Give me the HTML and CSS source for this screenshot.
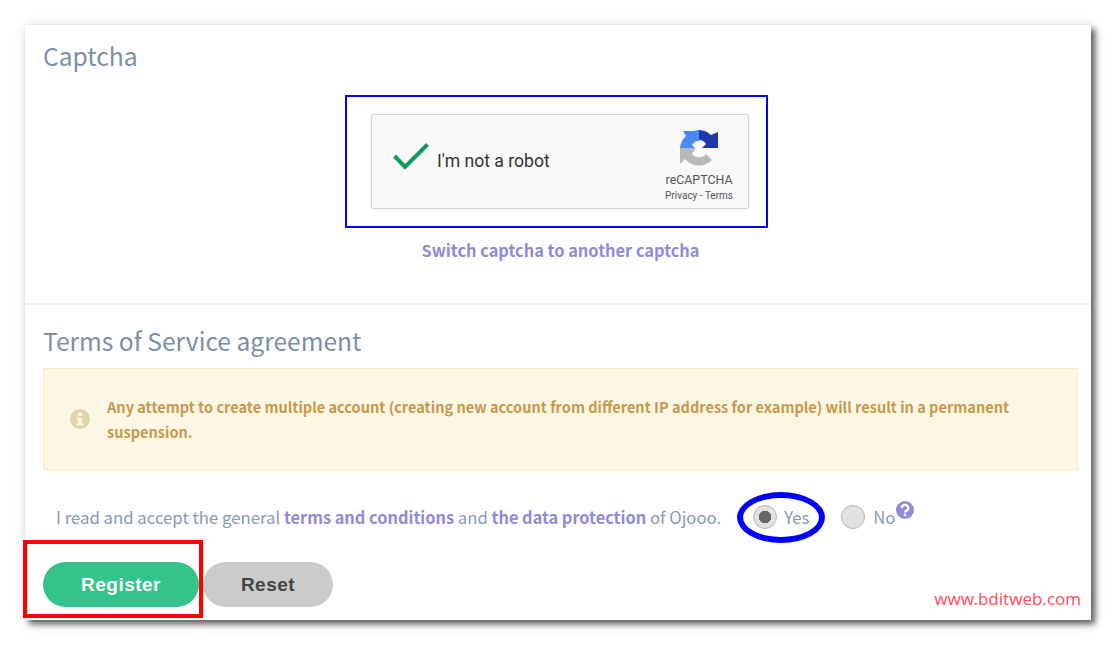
FILE: index.html
```html
<!DOCTYPE html>
<html lang="en">
<head>
    <meta charset="UTF-8">
    <meta name="viewport" content="width=device-width, initial-scale=1.0">
    <title>Register</title>
    <link rel="stylesheet" href="styles.css">
</head>
<body>
    <div class="card">
        <div class="captcha-section">
            <h2 class="section-title title-captcha">Captcha</h2>
            <div class="captcha-mark">
                <div class="recaptcha">
                    <svg class="recaptcha-check" width="36" height="27" viewBox="0 0 36 27">
                        <path d="M1.500 13 L12 24 L34.500 1.500" fill="none" stroke="#0f9d58" stroke-width="4"/>
                    </svg>
                    <span class="recaptcha-label">I'm not a robot</span>
                    <div class="recaptcha-brand">
                        <svg class="recaptcha-logo" width="38" height="38" viewBox="0 0 38 38">
                            <path d="M19 1 L19 12 A8 8 0 0 0 12 16 L15 19 L0 19 A19 19 0 0 1 6 7 L3 2 L14 2 A18 18 0 0 1 19 1 Z" fill="#4a8af4"/>
                            <path d="M19 1 A18 18 0 0 1 31 6 L38 3 L38 19 L22 19 L26 15 A9 9 0 0 0 19 11 Z" fill="#1c3aa9"/>
                            <path d="M0 19 L0 35 L5 30 A18 18 0 0 0 32 31 L26 25 A9 9 0 0 1 12 25 L16 19 Z" fill="#b9b9b9"/>
                        </svg>
                        <span class="recaptcha-name">reCAPTCHA</span>
                        <span class="recaptcha-links">Privacy - Terms</span>
                    </div>
                </div>
            </div>
            <a class="switch-link" href="#">Switch captcha to another captcha</a>
        </div>

        <div class="terms-section">
            <h2 class="section-title">Terms of Service agreement</h2>
            <div class="alert">
                <svg class="alert-icon" width="20" height="20" viewBox="0 0 20 20">
                    <circle cx="10" cy="10" r="10" fill="#e3d3a8"/>
                    <rect x="8" y="3.500" width="4" height="3.500" fill="#fdf6e3"/>
                    <path d="M6.500 8.500 H12 V14.500 H13.500 V16.500 H6.500 V14.500 H8 V10.500 H6.500 Z" fill="#fdf6e3"/>
                </svg>
                <p class="alert-text">Any attempt to create multiple account (creating new account from different IP address for example) will result in a permanent suspension.</p>
            </div>
            <div class="accept-row">
                <span>I read and accept the general <a href="#">terms and conditions</a> and <a href="#">the data protection</a> of Ojooo.</span>
                <div class="yes-mark">
                    <span class="radio radio-on"></span>
                    <span>Yes</span>
                </div>
                <div class="no-option">
                    <span class="radio"></span>
                    <span>No</span>
                    <svg class="help-icon" width="18" height="18" viewBox="0 0 18 18">
                        <circle cx="9" cy="9" r="9" fill="#8f8bd8"/>
                        <path d="M5.800 7 A3.200 3 0 1 1 10.500 9.600 Q9 10.300 9 11.500" fill="none" stroke="#fff" stroke-width="2.300"/>
                        <rect x="7.800" y="12.700" width="2.400" height="2.400" fill="#fff"/>
                    </svg>
                </div>
            </div>
            <div class="button-row">
                <div class="register-mark">
                    <button class="btn btn-register">Register</button>
                </div>
                <button class="btn btn-reset">Reset</button>
            </div>
        </div>
        <span class="watermark">www.bditweb.com</span>
    </div>
</body>
</html>
```

FILE: styles.css
```css
* {
    box-sizing: border-box;
}
body {
    margin: 0;
    padding: 25px;
    min-height: 645px;
    background: #fff;
    font-family: "Noto Sans CJK SC", "Open Sans", sans-serif;
    color: #8a9ab3;
}
a {
    color: #8f8bd8;
    font-weight: 700;
    text-decoration: none;
}
.card {
    position: relative;
    width: 1066px;
    height: 595px;
    background: #fff;
    box-shadow: 4px 4px 6px rgba(0, 0, 0, 0.6), 2px 2px 14px rgba(0, 0, 0, 0.14);
}
.section-title {
    margin: 0;
    font-size: 24.600px;
    line-height: 34px;
    font-weight: 400;
    color: #7b8fa8;
}

/* captcha */
.captcha-section {
    height: 280px;
    padding: 13px 13px 0 18px;
    display: flex;
    flex-direction: column;
    align-items: center;
    border-bottom: 2px solid #f0f3f7;
}
.title-captcha {
    align-self: flex-start;
}
.captcha-mark {
    margin: 23px 8px 0 0;
    width: 423px;
    height: 133px;
    padding: 17px 0 0 24px;
    border: 2px solid #0000ff;
}
.recaptcha {
    width: 378px;
    height: 95px;
    display: flex;
    align-items: center;
    padding: 0 15px 0 21px;
    background: #f9f9f9;
    border: 1px solid #d3d3d3;
    border-radius: 3px;
    box-shadow: 0 0 4px rgba(0, 0, 0, 0.08);
    font-family: Roboto, sans-serif;
}
.recaptcha-check {
    flex: none;
    margin-bottom: 10px;
}
.recaptcha-label {
    margin: -2px 0 0 8px;
    font-size: 17.600px;
    color: #333;
}
.recaptcha-brand {
    margin-left: auto;
    padding-top: 9px;
    display: flex;
    flex-direction: column;
    align-items: center;
    color: #555;
}
.recaptcha-name {
    margin-top: 5px;
    font-size: 12.400px;
    line-height: 16px;
}
.recaptcha-links {
    margin-top: 1px;
    font-size: 10px;
    line-height: 14px;
}
.switch-link {
    margin-top: 10px;
    font-size: 16.400px;
    line-height: 24px;
}

/* terms */
.terms-section {
    padding: 18px 13px 0 18px;
}
.alert {
    margin-top: 11px;
    height: 102px;
    display: flex;
    align-items: center;
    padding: 0 28px 0 26px;
    background: #fdf6e3;
    border: 1px solid #f8e9c4;
}
.alert-icon {
    flex: none;
    margin-right: 17px;
}
.alert-text {
    margin: 0;
    font-size: 14.550px;
    line-height: 25px;
    font-weight: 700;
    color: #c59a4f;
}
.accept-row {
    margin-top: 19px;
    height: 56px;
    display: flex;
    align-items: center;
    padding-left: 13px;
    font-size: 16.750px;
    line-height: 24px;
    color: #8a9ab3;
}
.accept-row a {
    font-size: 16.350px;
}
.yes-mark {
    margin-left: 16px;
    width: 88px;
    height: 51px;
    display: flex;
    align-items: center;
    gap: 7px;
    padding-left: 10px;
    border: 6px solid #0000ff;
    border-radius: 50%;
}
.no-option {
    margin-left: 16px;
    display: flex;
    align-items: center;
    gap: 8px;
}
.radio {
    width: 24px;
    height: 24px;
    flex: none;
    border: 1px solid #b5b5b5;
    border-radius: 50%;
    background: #e1e1e1;
}
.radio-on {
    background: radial-gradient(circle, #666 0, #666 6px, #e1e1e1 6.500px);
}
.help-icon {
    margin: -14px 0 0 -7px;
}
.button-row {
    margin-top: -5px;
    display: flex;
    align-items: flex-start;
}
.register-mark {
    margin-left: -20px;
    width: 180px;
    height: 78px;
    padding: 18px 0 0 16px;
    border: 4px solid #ff0000;
}
.btn {
    height: 45px;
    border: 0;
    border-radius: 23px;
    font-family: "Liberation Sans", Arial, sans-serif;
    font-size: 19px;
    letter-spacing: 0.500px;
    font-weight: 700;
}
.btn-register {
    width: 156px;
    background: #34c48b;
    color: #fff;
}
.btn-reset {
    width: 130px;
    margin-top: 22px;
    background: #cbcbcb;
    color: #444;
}
.watermark {
    position: absolute;
    right: 10px;
    bottom: 9px;
    font-family: "Noto Sans", sans-serif;
    font-size: 16.900px;
    line-height: 24px;
    color: #ff5560;
}
```
